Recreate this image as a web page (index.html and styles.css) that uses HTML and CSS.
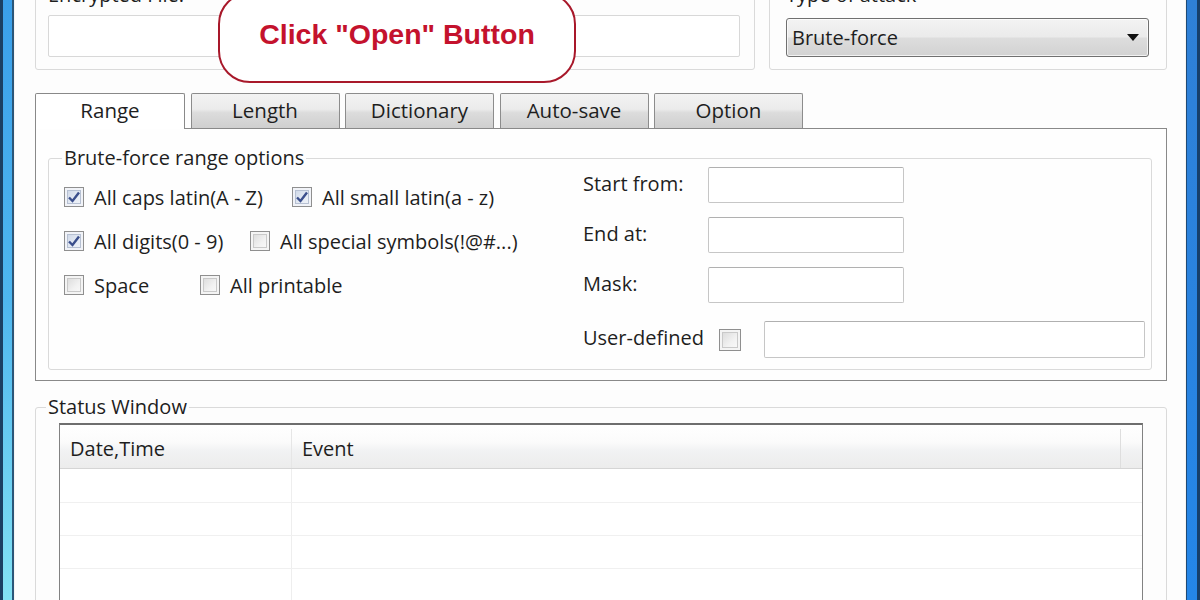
FILE: index.html
```html
<!DOCTYPE html>
<html>
<head>
<meta charset="utf-8">
<link rel="stylesheet" href="styles.css">
</head>
<body>
<div class="window">
  <div class="frame frame-left"></div>
  <div class="client">
    <div class="top-row">
      <fieldset class="group group-file">
        <legend>Encrypted File:</legend>
        <div class="textbox file-box"></div>
      </fieldset>
      <fieldset class="group group-attack">
        <legend>Type of attack</legend>
        <div class="combo">
          <span>Brute-force</span>
          <svg class="combo-arrow" width="12" height="7" viewBox="0 0 12 7"><path d="M0 0 H12 L6 7 Z" fill="#111"/></svg>
        </div>
      </fieldset>
    </div>

    <div class="tabs">
      <div class="tab tab-active">Range</div>
      <div class="tab">Length</div>
      <div class="tab">Dictionary</div>
      <div class="tab">Auto-save</div>
      <div class="tab">Option</div>
    </div>
    <div class="tab-panel">
      <fieldset class="group range-group">
        <legend>Brute-force range options</legend>
        <div class="range-grid">
          <div class="checks">
            <div class="check-row">
              <label class="check check-w1"><span class="box checked"><svg width="14" height="14" viewBox="0 0 14 14"><path d="M2 7.5 L5.5 11 L12 2.5" fill="none" stroke="#3b4f8c" stroke-width="2.4"/></svg></span>All caps latin(A - Z)</label>
              <label class="check"><span class="box checked"><svg width="14" height="14" viewBox="0 0 14 14"><path d="M2 7.5 L5.5 11 L12 2.5" fill="none" stroke="#3b4f8c" stroke-width="2.4"/></svg></span>All small latin(a - z)</label>
            </div>
            <div class="check-row">
              <label class="check check-w2"><span class="box checked"><svg width="14" height="14" viewBox="0 0 14 14"><path d="M2 7.5 L5.5 11 L12 2.5" fill="none" stroke="#3b4f8c" stroke-width="2.4"/></svg></span>All digits(0 - 9)</label>
              <label class="check"><span class="box"></span>All special symbols(!@#...)</label>
            </div>
            <div class="check-row">
              <label class="check check-w3"><span class="box"></span>Space</label>
              <label class="check"><span class="box"></span>All printable</label>
            </div>
          </div>
          <div class="fields">
            <div class="field-label">Start from:</div>
            <div class="textbox field-box"></div>
            <div class="field-label">End at:</div>
            <div class="textbox field-box"></div>
            <div class="field-label">Mask:</div>
            <div class="textbox field-box"></div>
            <div class="user-row">
              <span class="field-label user-label">User-defined</span>
              <span class="box"></span>
              <div class="textbox user-box"></div>
            </div>
          </div>
        </div>
      </fieldset>
    </div>

    <fieldset class="group status-group">
      <legend>Status Window</legend>
      <div class="list">
        <div class="list-head">
          <div class="col col-date">Date,Time</div>
          <div class="col col-event">Event</div>
          <div class="col col-extra"></div>
        </div>
        <div class="list-row row-first"><div class="col col-date"></div><div class="col col-event"></div></div>
        <div class="list-row"><div class="col col-date"></div><div class="col col-event"></div></div>
        <div class="list-row"><div class="col col-date"></div><div class="col col-event"></div></div>
        <div class="list-row"><div class="col col-date"></div><div class="col col-event"></div></div>
      </div>
    </fieldset>

    <div class="callout">Click "Open" Button</div>
  </div>
  <div class="frame frame-right"></div>
</div>
</body>
</html>
```

FILE: styles.css
```css
* { box-sizing: border-box; }

html, body {
  margin: 0;
  padding: 0;
  overflow: hidden;
}

body {
  font-family: "Open Sans", "Noto Sans", "DejaVu Sans", sans-serif;
  font-size: 20px;
  color: #1e1e1e;
  background: #fdfdfd;
}

.window {
  display: flex;
  width: 1200px;
  height: 600px;
  overflow: hidden;
  background: #fdfdfd;
}

.frame {
  flex: 0 0 15px;
  height: 600px;
}

.frame-left {
  background:
    linear-gradient(to right, #1b3f63 0 3px, transparent 3px 12px, #2b5678 12px 14px, #f4f4f4 14px 15px),
    linear-gradient(to bottom, #3a9fea 0%, #4eb6ef 50%, #83e2f4 100%);
}

.frame-right {
  background:
    linear-gradient(to right, #f6f3ee 0 1px, #1d4a78 1px 2px, transparent 2px 12px, #173f6a 12px 15px),
    linear-gradient(to bottom, #2f80d6 0%, #2486e8 100%);
}

.client {
  flex: 1;
  position: relative;
  padding: 0 18px 0 20px;
  background: #fdfdfd;
}

/* group boxes */
.group {
  margin: 0;
  border: 1px solid #dadada;
  border-radius: 3px;
  min-width: 0;
}

.group legend {
  padding: 0 2px;
  margin-left: -2px;
  line-height: 22px;
  font-size: 20px;
  color: #1e1e1e;
}

.top-row {
  display: grid;
  grid-template-columns: 720px 398px;
  column-gap: 14px;
  margin-top: -16px;
}

.group-file {
  padding: 9px 14px 12px 12px;
}

.group-attack {
  padding: 12px 17px 12px 16px;
}

.textbox {
  background: #fff;
  border: 1px solid #c6c6c6;
  border-top-color: #b0b0b0;
  border-radius: 2px;
}

.file-box {
  height: 42px;
  border-color: #d8d8d8;
}

.combo {
  height: 39px;
  display: flex;
  align-items: center;
  justify-content: space-between;
  padding: 0 9px 0 5px;
  border: 1px solid #707070;
  border-radius: 3px;
  background: linear-gradient(to bottom, #f3f3f3 0%, #ebebeb 48%, #dddddd 52%, #d2d2d2 100%);
  box-shadow: inset 0 0 0 1px rgba(255,255,255,0.7);
  font-size: 20px;
}

/* tabs */
.tabs {
  display: flex;
  gap: 5.5px;
  margin-top: 23px;
  height: 35px;
  position: relative;
  z-index: 1;
}

.tab {
  width: 149px;
  height: 35px;
  display: flex;
  align-items: center;
  justify-content: center;
  border: 1px solid #8c8c8c;
  border-bottom: none;
  border-radius: 2px 2px 0 0;
  background: linear-gradient(to bottom, #f3f3f3 0%, #ebebeb 45%, #dcdcdc 55%, #cfcfcf 100%);
  font-size: 20.5px;
  padding-bottom: 2px;
}

.tab-active {
  width: 150px;
  height: 36px;
  background: #fff;
  border-color: #898989;
  padding-bottom: 4px;
}

.tab-panel {
  border: 1px solid #898989;
  background: #fefefe;
  padding: 18px 14px 10px 12px;
}

.range-group {
  padding: 0 13px 11px 15px;
}

.range-grid {
  display: grid;
  grid-template-columns: 519px 1fr;
}

.checks {
  padding-top: 17px;
  display: flex;
  flex-direction: column;
  gap: 22px;
}

.check-row {
  display: flex;
  align-items: center;
  height: 22px;
}

.check {
  display: flex;
  align-items: center;
  gap: 10px;
  white-space: nowrap;
  font-size: 20px;
}

.check-w1 { width: 228px; }
.check-w2 { width: 186px; }
.check-w3 { width: 136px; }

.box {
  flex: 0 0 20px;
  width: 20px;
  height: 20px;
  border: 1px solid #8f8f8f;
  background: linear-gradient(135deg, #d6d6d6 0%, #f2f2f2 60%, #fbfbfb 100%);
  box-shadow: inset 0 0 0 2px #f4f4f4, inset 0 0 0 3px #c9c9c9;
  display: flex;
  align-items: center;
  justify-content: center;
}

.box.checked {
  background: linear-gradient(135deg, #c9d3e4 0%, #e6ecf5 60%, #f4f6fa 100%);
  box-shadow: inset 0 0 0 2px #f1f3f8, inset 0 0 0 3px #b6c0d2;
}

.fields {
  display: grid;
  grid-template-columns: 125px 196px;
  grid-template-rows: 36px 36px 36px 41px;
  row-gap: 14px;
  margin-top: -2px;
  align-items: center;
}

.field-label {
  font-size: 20px;
  white-space: nowrap;
  padding-bottom: 4px;
}

.field-box {
  height: 36px;
}

.user-row {
  grid-column: 1 / 3;
  align-self: end;
  display: flex;
  align-items: center;
  height: 37px;
  width: 562px;
}

.user-label {
  width: 136px;
}

.user-row .box {
  width: 22px;
  height: 22px;
  flex-basis: 22px;
}

.user-box {
  margin-left: 23px;
  width: 381px;
  height: 37px;
}

/* status window */
.status-group {
  margin-top: 15px;
  padding: 5px 23px 0 23px;
  height: 260px;
}

.status-group legend {
  margin-left: -13px;
}

.list {
  border: 1px solid #828282;
  border-top: 2px solid #6e6e6e;
  background: #fff;
  height: 300px;
}

.list-head {
  display: flex;
  height: 44px;
  border-bottom: 1px solid #d5d5d5;
  background: linear-gradient(to bottom, #ffffff 0%, #fbfbfb 40%, #f1f2f3 60%, #ececec 100%);
  font-size: 20px;
  padding-top: 4px;
}

.col {
  display: flex;
  align-items: center;
}

.col-date {
  width: 232px;
  padding-left: 10px;
  border-right: 1px solid #e6e6e6;
}

.col-event {
  flex: 1;
  padding-left: 10px;
}

.col-extra {
  width: 22px;
  border-left: 1px solid #dedede;
}

.list-row {
  display: flex;
  height: 33px;
  border-bottom: 1px solid #f0f0f0;
}

.list-row.row-first {
  height: 34px;
}

.list-row .col-date {
  border-right: 1px solid #eeeeee;
}

/* callout */
.callout {
  position: absolute;
  left: 203px;
  top: -8px;
  width: 358px;
  height: 91px;
  border: 2.5px solid #a8182a;
  border-radius: 32px;
  background: #ffffff;
  display: flex;
  align-items: center;
  justify-content: center;
  padding-bottom: 6px;
  font-family: "Liberation Sans", Arial, sans-serif;
  font-weight: bold;
  font-size: 28.5px;
  color: #c4122d;
  z-index: 2;
}
```
